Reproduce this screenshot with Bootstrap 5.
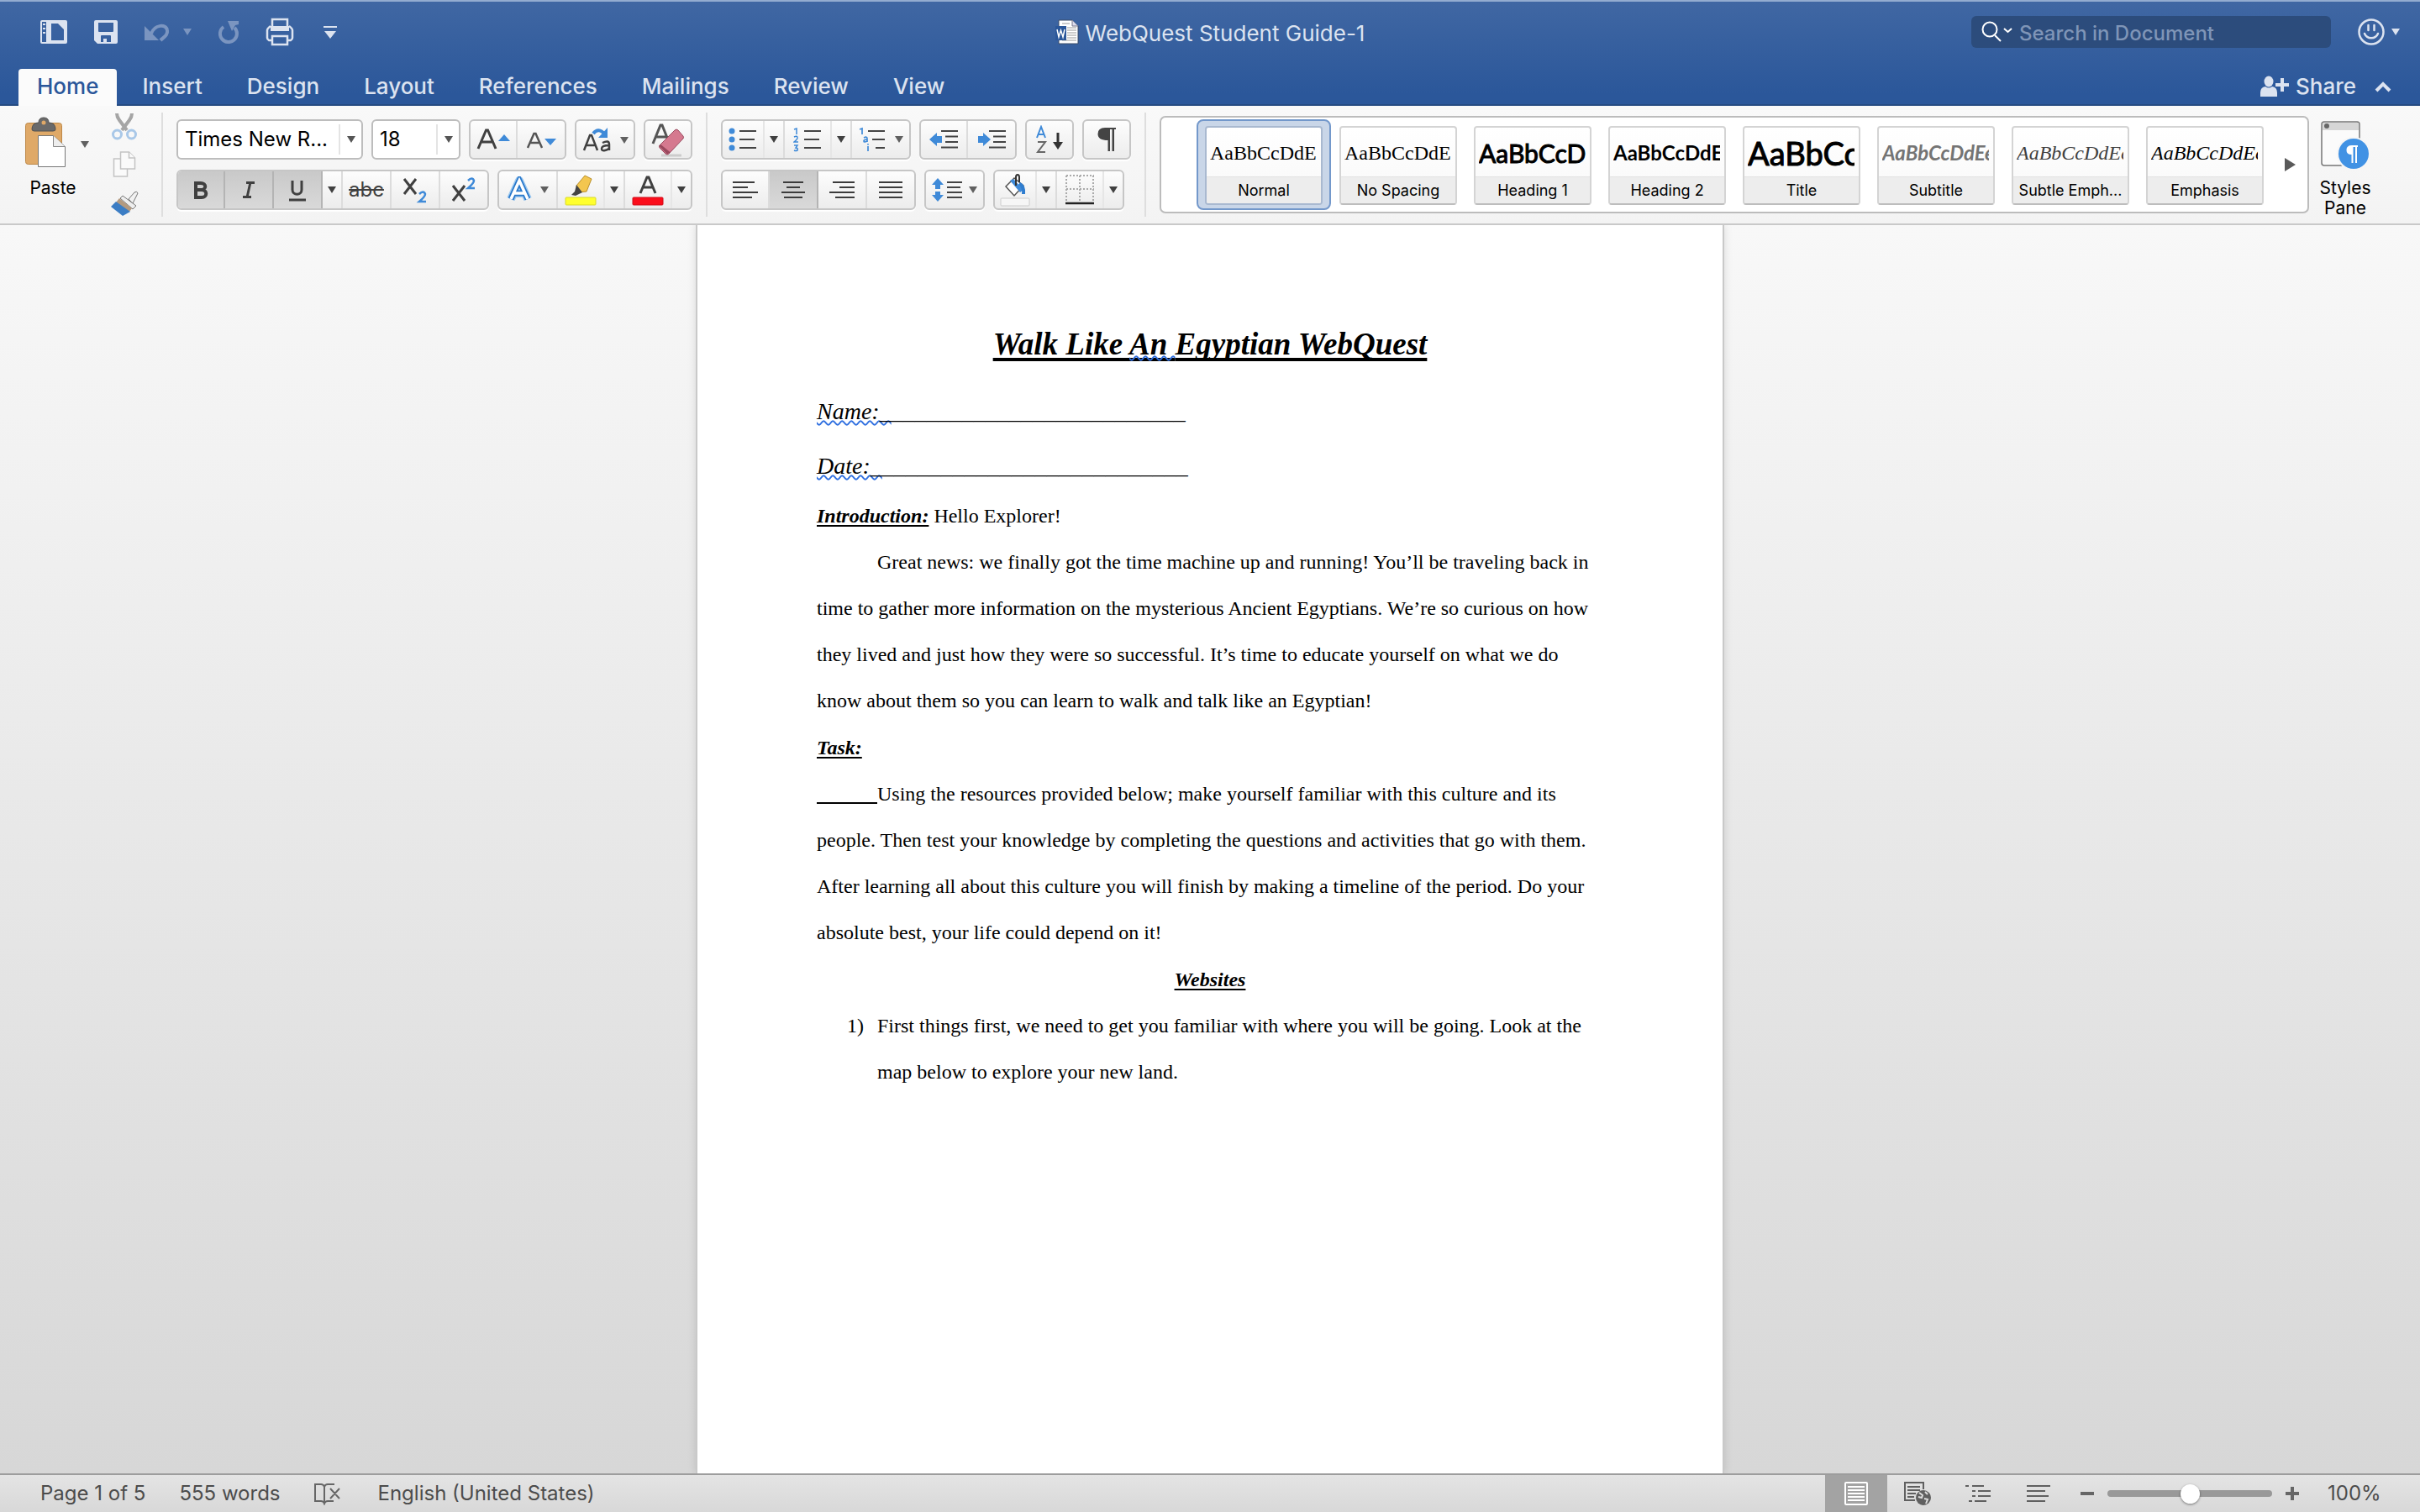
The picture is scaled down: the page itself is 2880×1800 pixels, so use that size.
<!DOCTYPE html>
<html lang="en">
<head>
<meta charset="utf-8">
<meta name="viewport" content="width=device-width, initial-scale=1">
<title>WebQuest Student Guide-1</title>
<link href="https://cdn.jsdelivr.net/npm/bootstrap@5.3.0/dist/css/bootstrap.min.css" rel="stylesheet">
<style>
  body { font-family: Inter, "Liberation Sans", sans-serif; font-size: 21px; line-height: 24px; color: #000; }
  button { font: inherit; color: inherit; }
  svg { display: block; flex: none; }
  .plain { background: none; border: 0; padding: 0; }

  /* title bar and tabs */
  .app-head { background: linear-gradient(#4067a3, #2b579a 90%); border-top: 2px solid #93acd0; border-bottom: 2px solid #264b82; color: #dce3f0; font-size: 26px; }
  .title-row { height: 72px; margin-bottom: 8px; }
  .title-left { padding-left: 48px; gap: 32px; }
  .title-right { padding-right: 24px; gap: 8px; }
  .doc-name { gap: 8px; }
  .doc-name span { padding-top: 3px; }
  .faded { color: #7b95c0; }
  .undo-pair { gap: 16px; }
  .search-box { width: 428px; height: 38px; margin-right: 24px; padding-left: 12px; gap: 5px; border-radius: 6px; background: #2c4c7c; }
  .search-box input { background: none; border: 0; outline: 0; padding: 2px 0 0; color: #fff; font-size: 24px; font-weight: 500; }
  .search-box input::placeholder { color: #7f95b7; opacity: 1; }
  .tab-row { height: 42px; font-weight: 500; }
  .tab-list { padding-left: 22px; gap: 7px; height: 44px; margin-bottom: -2px; }
  .tab-list .nav-link { color: #dce3f0; padding: 9px 23px 11px; border-radius: 4px 4px 0 0; }
  .tab-list .nav-link.active { background: #fbfbfb; color: #2b579a; padding: 9px 22px 11px; }
  .share-side { padding-right: 34px; gap: 22px; }

  /* ribbon */
  .ribbon { background: linear-gradient(#f9f9f9, #f3f3f3); border-bottom: 2px solid #c9c9c9; height: 142px; }
  .ribbon-sep { width: 2px; margin: 8px 16px; background: #dedede; }
  .paste-btn { width: 84px; margin: 12px 20px 0 24px; }
  .paste-btn span { padding-right: 6px; margin-top: 12px; }
  .mini-btn { display: block; width: 40px; height: 46px; }
  .rb-rows { padding-top: 16px; gap: 12px; }
  .rb-row { height: 48px; gap: 10px; }
  .rb-group { height: 48px; border: 2px solid #c6c6c6; border-radius: 6px; background: linear-gradient(#fdfdfd, #ececec); overflow: hidden; box-shadow: 0 2px 1px #fff; }
  .rb-group .btn { width: 58px; padding: 0; border: 0; border-radius: 0; border-right: 2px solid #dcdcdc; color: #404040; display: flex; align-items: center; justify-content: center; }
  .rb-group .btn:last-child { border-right: 0; width: 56px; }
  .rb-group .btn:first-child { width: 56px; }
  .rb-group .btn:only-child { width: 54px; }
  .rb-group .btn.w-wide { width: 70px; }
  .rb-group .btn.w-wide:last-child { width: 68px; }
  .rb-group .btn.w-split { width: 56px; border-right-color: #e6e6e6; }
  .rb-group .btn.w-split:first-child { width: 50px; }
  .rb-group .btn.w-drop { width: 24px; }
  .rb-group .btn.w-drop:last-child { width: 22px; }
  .rb-group .btn.pressed { background: linear-gradient(#c9c9c9, #d9d9d9); border-right-color: #b4b4b4; }
  .rb-group .btn.struck { font-size: 24px; text-decoration: line-through; text-decoration-thickness: 2px; }
  .combo { height: 48px; border: 2px solid #bdbdbd; border-radius: 6px; background: #fff; position: relative; }
  .combo select { appearance: none; border: 0; background: none; outline: 0; width: 100%; height: 44px; padding: 0 0 0 8px; font-size: 24px; color: #000; }
  .combo .combo-mark { position: absolute; right: 0; top: 4px; bottom: 4px; width: 27px; border-left: 2px solid #e4e4e4; color: #555; pointer-events: none; }
  .combo-font { width: 222px; }
  .combo-size { width: 106px; }

  .gallery { margin-top: 12px; height: 116px; border: 2px solid #bcbcbc; border-radius: 7px; background: #fff; padding-left: 42px; }
  .style-item { width: 160px; height: 108px; border: 2px solid transparent; border-radius: 8px; padding: 6px 8px 8px; }
  .style-item.chosen { background: #c9d6e8; border-color: #7398cb; }
  .style-tile { width: 140px; height: 94px; border: 2px solid #d4d4d4; border-bottom-color: #bdbdbd; border-radius: 4px; background: linear-gradient(#fff, #f8f8f8); display: flex; flex-direction: column; overflow: hidden; }
  .style-item.chosen .style-tile { border-color: #a9b9d0; }
  .style-demo { height: 60px; line-height: 60px; margin: 0 5px 0 4px; overflow: hidden; white-space: nowrap; text-align: left; font-family: "Liberation Serif", serif; font-size: 24px; }
  .style-name { flex: 1; border-top: 1px solid #e2e2e2; background: #ededed; font-size: 18px; line-height: 31px; text-align: center; }
  .demo-sans { font-family: Lato, "Open Sans", sans-serif; }
  .demo-h1 { font-size: 30px; -webkit-text-stroke: 1px #000; }
  .demo-h2 { font-size: 24px; font-weight: 700; }
  .demo-title { font-size: 38px; -webkit-text-stroke: 1px #000; }
  .demo-sub { font-size: 24px; font-style: italic; font-weight: 700; color: #747474; }
  .demo-subtle { font-style: italic; color: #404040; }
  .gallery-next { margin-left: auto; width: 40px; }
  .pane-btn { width: 86px; margin: 18px 46px 0 0; }
  .pane-btn span { margin-top: 10px; }

  /* document */
  .desk { background: linear-gradient(#f8f8f8, #d7d7d7); min-height: 0; }
  .sheet { width: 1224px; padding: 101px 142px 0; background: #fff; border: 2px solid #c9c9c9; border-width: 0 2px; box-shadow: 0 0 10px rgba(0,0,0,.12); font-family: "Liberation Serif", serif; font-size: 24px; line-height: 55px; }
  .sheet p, .sheet h1, .sheet h2, .sheet ol { margin: 0; font-size: inherit; line-height: inherit; }
  .sheet u { text-underline-offset: 3px; text-decoration-thickness: 2px; text-decoration-skip-ink: none; }
  .sheet h1 { font-size: 37px; line-height: 82px; font-weight: 700; font-style: italic; text-align: center; }
  .sheet h1 u { text-decoration-thickness: 4px; text-underline-offset: 4px; }
  .sheet h2 { line-height: 56px; font-weight: 700; font-style: italic; }
  .sheet .blank-name { font-size: 28px; line-height: 78px; font-style: italic; }
  .sheet .blank-date { font-size: 28px; line-height: 52px; font-style: italic; margin-bottom: 6px; }
  .proof { text-decoration: underline wavy #2f6fe0 2px; text-decoration-skip-ink: none; text-underline-offset: 1px; }
  .sheet .indent { text-indent: 72px; }
  .tab-line { display: inline-block; width: 72px; height: 20px; border-bottom: 2px solid #000; vertical-align: -4px; }
  .sheet ol { list-style: none; padding: 0 0 0 72px; }
  .item-no { display: inline-block; width: 36px; margin-left: -36px; }

  /* status bar */
  .status { height: 46px; background: linear-gradient(#e4e4e4, #d8d8d8); border-top: 2px solid #9d9d9d; color: #4c4c4c; font-size: 24px; }
  .status-left { padding-left: 48px; gap: 40px; }
  .view-btn { width: 72px; height: 44px; display: flex; align-items: center; justify-content: center; color: #606060; }
  .view-btn.on { background: #a3a3a3; color: #fff; width: 74px; }
  .zoom-side { padding-left: 14px; gap: 16px; }
  .zoom-side input { appearance: none; width: 196px; height: 8px; border-radius: 4px; background: #999; margin: 0; }
  .zoom-side input::-webkit-slider-thumb { appearance: none; width: 23px; height: 23px; border-radius: 50%; background: #fff; box-shadow: 0 1px 3px rgba(0,0,0,.45); }
  .zoom-val { width: 110px; margin-left: 18px; }
</style>
</head>
<body class="vh-100 d-flex flex-column overflow-hidden">

<svg width="0" height="0" class="position-absolute" aria-hidden="true">
  <symbol id="caret" viewBox="0 0 10 8"><path d="M0 0h10L5 8z" fill="currentColor"/></symbol>
</svg>

<header class="app-head">
  <div class="title-row d-flex align-items-center">
    <div class="title-left d-flex align-items-center flex-fill w-25">
      <button class="plain" aria-label="Sidebar"><svg width="32" height="30" viewBox="0 0 32 30"><path fill="#dce3f0" fill-rule="evenodd" d="M2 1h28q2 0 2 2v24q0 2-2 2H2q-2 0-2-2V3q0-2 2-2zm0 2v24h5V3zm11 2v20h15V12l-7-7z"/><path d="M3 6h3M3 11h3M3 16h3" stroke="#dce3f0" stroke-width="2"/><path d="M20 5v8h8" fill="none" stroke="#3a619f" stroke-width="2"/><path d="M21 4h8v8z" fill="#dce3f0"/></svg></button>
      <button class="plain" aria-label="Save"><svg width="28" height="30" viewBox="0 0 28 30"><path fill="#dce3f0" fill-rule="evenodd" d="M2 1h24q2 0 2 2v24q0 2-2 2H4l-4-4V3q0-2 2-2zm3 3v10q0 1 1 1h16q1 0 1-1V4zm3 16v7h3v-4h4v4h5v-7q0-1-1-1H9q-1 0-1 1z"/></svg></button>
      <div class="undo-pair d-flex align-items-center faded">
        <button class="plain" aria-label="Undo"><svg width="30" height="24" viewBox="0 0 30 24"><path d="M0 5v17h17z" fill="currentColor"/><path d="M8 14C12 3 26 2 27 10c1 6-4 8-8 12" fill="none" stroke="currentColor" stroke-width="4"/></svg></button>
        <button class="plain" aria-label="Undo history"><svg width="10" height="8"><use href="#caret"/></svg></button>
      </div>
      <button class="plain faded" aria-label="Redo"><svg width="24" height="28" viewBox="0 0 24 28"><path d="M11 1h13v4l-4 1-4 7z" fill="currentColor"/><path d="M6 8a10 10 0 1 0 13 1" fill="none" stroke="currentColor" stroke-width="4"/></svg></button>
      <button class="plain" aria-label="Print"><svg width="34" height="34" viewBox="0 0 34 34" fill="none" stroke="#dce3f0" stroke-width="2.500"><path d="M8 14V2h18v12"/><path d="M8 27H4q-2-1-2-3v-9q0-2 4-5M26 27h4q2-1 2-3v-9q0-2-4-5"/><rect x="6" y="10" width="22" height="6" fill="#dce3f0" stroke="none"/><rect x="8" y="22" width="18" height="10"/></svg></button>
      <button class="plain" aria-label="Customize toolbar"><svg width="20" height="16" viewBox="0 0 20 16" fill="#dce3f0"><path d="M3 1h16v2H3zM4 7h14l-7 9z"/></svg></button>
    </div>
    <div class="doc-name d-flex align-items-center">
      <svg width="28" height="30" viewBox="0 0 28 30"><path d="M4 1h16l7 7v21H4z" fill="#fff" stroke="#3b4a66"/><path d="M20 1v7h7" fill="#dde" stroke="#778"/><path d="M8 5h9M14 10h11M14 13h11M14 16h11M14 19h11M14 22h11M8 25h17" stroke="#999" stroke-width="1"/><rect y="8" width="13" height="17" fill="#2b579a"/><path d="M2 12l2 9 2.500-8L9 21l2-9" fill="none" stroke="#fff" stroke-width="1.500"/></svg>
      <span>WebQuest Student Guide-1</span>
    </div>
    <div class="title-right d-flex align-items-center justify-content-end flex-fill w-25">
      <label class="search-box d-flex align-items-center">
        <svg width="40" height="26" viewBox="0 0 40 26" fill="none" stroke="#fff" stroke-width="2"><circle cx="10" cy="10" r="8.500"/><path d="M16 17l7 7M27 9l4.500 4L36 9"/></svg>
        <input class="flex-fill" type="text" placeholder="Search in Document" aria-label="Search in Document">
      </label>
      <button class="plain" aria-label="Feedback"><svg width="32" height="32" viewBox="0 0 32 32" fill="none" stroke="#dce3f0" stroke-width="2.500"><circle cx="16" cy="16" r="14.500"/><path d="M12.500 8v6M19.500 8v6M8 18c3 7 13 7 16 0" stroke-width="2.500" stroke-linecap="round"/></svg></button>
      <button class="plain" aria-label="Feedback menu"><svg width="10" height="8"><use href="#caret"/></svg></button>
    </div>
  </div>
  <div class="tab-row d-flex justify-content-between">
    <nav class="nav tab-list">
      <a class="nav-link active" href="#">Home</a>
      <a class="nav-link" href="#">Insert</a>
      <a class="nav-link" href="#">Design</a>
      <a class="nav-link" href="#">Layout</a>
      <a class="nav-link" href="#">References</a>
      <a class="nav-link" href="#">Mailings</a>
      <a class="nav-link" href="#">Review</a>
      <a class="nav-link" href="#">View</a>
    </nav>
    <div class="share-side d-flex align-items-center">
      <button class="plain d-flex align-items-center gap-2"><svg width="34" height="26" viewBox="0 0 34 26" fill="#dce3f0"><ellipse cx="10" cy="7" rx="5.500" ry="6.500"/><path d="M0 25v-5q0-6 6-7 4 3 8 0 6 1 6 7v5zM24 3h4v6h6v4h-6v6h-4v-6h-6V9h6z"/></svg>Share</button>
      <button class="plain" aria-label="Collapse ribbon"><svg width="20" height="14" viewBox="0 0 20 14" fill="none" stroke="#dce3f0" stroke-width="4"><path d="M2 12l8-8 8 8"/></svg></button>
    </div>
  </div>
</header>

<section class="ribbon d-flex" aria-label="Home ribbon">
  <button class="plain paste-btn d-flex flex-column align-items-center align-self-start">
    <svg width="84" height="62" viewBox="0 0 84 62"><rect x="6.500" y="8.500" width="43" height="49" rx="3" fill="#dfa968" stroke="#bd8848"/><path d="M14 16q0-8 8-8 0-6 6-6t6 6q8 0 8 8 0 2-3 2H17q-3 0-3-2z" fill="#6a6a6a" stroke="#505050"/><circle cx="28" cy="8" r="2.500" fill="#dfa968"/><path d="M21.500 23.500h18l14 13v24h-32z" fill="#fff" stroke="#777"/><path d="M39.500 23.500v13h14" fill="#eee" stroke="#888"/><path d="M72 30h10l-5 8z" fill="#606060"/></svg>
    <span>Paste</span>
  </button>
  <div>
    <button class="plain mini-btn" aria-label="Cut"><svg width="40" height="46" viewBox="0 0 40 46" fill="none"><path d="M11 9q0 4 3 8l9 12M29 9q0 4-3 8l-9 12" stroke="#a5a5a5" stroke-width="4"/><circle cx="11.500" cy="34" r="5" stroke="#a9c8e8" stroke-width="3"/><circle cx="28.500" cy="34" r="5" stroke="#a9c8e8" stroke-width="3"/></svg></button>
    <button class="plain mini-btn" aria-label="Copy"><svg width="40" height="46" viewBox="0 0 40 46" fill="#fafafa" stroke="#c3c3c3" stroke-width="1.500"><path d="M7.500 17h10l6 6v15h-16z"/><path d="M15.500 9h10l7 7v13h-17z"/><path d="M25.500 9v7h7"/></svg></button>
    <button class="plain mini-btn" aria-label="Format painter"><svg width="40" height="46" viewBox="0 0 40 46"><path d="M25 19l7-8q3-2 4 1l-6 12z" fill="#f1f1f1" stroke="#777"/><path d="M18 15l16 12-4 4-15-13z" fill="#eee" stroke="#777"/><path d="M14 18l15 12-3 4-16-11z" fill="#b39a80"/><path d="M10 22l17 12-9 5L4 28z" fill="#3b7dc4"/></svg></button>
  </div>
  <div class="ribbon-sep ms-4"></div>

  <div class="rb-rows d-flex flex-column">
    <div class="rb-row d-flex">
      <div class="combo combo-font"><select aria-label="Font"><option>Times New R...</option></select><span class="combo-mark d-flex align-items-center justify-content-center"><svg width="10" height="8"><use href="#caret"/></svg></span></div>
      <div class="combo combo-size"><select aria-label="Font size"><option>18</option></select><span class="combo-mark d-flex align-items-center justify-content-center"><svg width="10" height="8"><use href="#caret"/></svg></span></div>
      <div class="rb-group d-flex">
        <button class="btn" aria-label="Grow font"><svg width="42" height="30" viewBox="0 0 42 30"><path d="M3 26L12.500 4h2L24 26M7 18h13" fill="none" stroke="#404040" stroke-width="3"/><path d="M27 17h14l-7-8z" fill="#3f8ad8"/></svg></button>
        <button class="btn" aria-label="Shrink font"><svg width="42" height="30" viewBox="0 0 42 30"><path d="M5 25L12.500 8h2L22 25M8 19h11" fill="none" stroke="#555" stroke-width="2.500"/><path d="M25 14h14l-7 8z" fill="#3f8ad8"/></svg></button>
      </div>
      <div class="rb-group d-flex">
        <button class="btn w-wide" aria-label="Change case"><svg width="60" height="36" viewBox="0 0 60 36"><path d="M5 31l7-18h2l7 18M8 25h10" fill="none" stroke="#404040" stroke-width="2.500"/><path d="M27 22q8-4 8 2v7M35 25q-9 0-9 4 0 3 4 2 5-1 5-4" fill="none" stroke="#404040" stroke-width="2.500"/><path d="M16 11q6-8 14 1" fill="none" stroke="#3f8ad8" stroke-width="4"/><path d="M33 4v12H22z" fill="#3f8ad8"/><path d="M48 15h10l-5 8z" fill="#606060"/></svg></button>
      </div>
      <div class="rb-group d-flex">
        <button class="btn" aria-label="Clear formatting"><svg width="44" height="42" viewBox="0 0 44 42"><path d="M4 26l9-22h2l8 20M8 18h12" fill="none" stroke="#555" stroke-width="3"/><path d="M14 40h24" stroke="#ccc" stroke-width="3"/><path d="M12 28L30 10q2-2 4 0l6 7q1 2 0 3L23 38q-2 2-4 0l-7-7q-1-2 0-3z" fill="#d5798f" stroke="#99495e"/><path d="M12 28l10 10M13 28l11 9" stroke="#99495e" stroke-width="2"/></svg></button>
      </div>
    </div>
    <div class="rb-row d-flex">
      <div class="rb-group d-flex">
        <button class="btn pressed" aria-label="Bold" aria-pressed="true"><svg width="20" height="24" viewBox="0 0 20 24" fill="none" stroke="#404040" stroke-width="4"><path d="M4 4h6c7 0 7 8 0 8H4zM4 12h7c7 0 7 9 0 9H4z"/></svg></button>
        <button class="btn pressed" aria-label="Italic" aria-pressed="true"><svg width="20" height="24" viewBox="0 0 20 24" fill="none" stroke="#404040" stroke-width="3"><path d="M7 3.500h10M12 3L8 21M3 20.500h10"/></svg></button>
        <button class="btn pressed" aria-label="Underline" aria-pressed="true"><svg width="22" height="28" viewBox="0 0 22 28" fill="none" stroke="#404040" stroke-width="3"><path d="M5 3v11c0 7 11 7 11 0V3M1 26h20"/></svg></button>
        <button class="btn w-drop" aria-label="Underline style"><svg width="10" height="8"><use href="#caret"/></svg></button>
        <button class="btn struck" aria-label="Strikethrough">abc</button>
        <button class="btn" aria-label="Subscript"><svg width="30" height="32" viewBox="0 0 30 32" fill="none"><path d="M2 3l14 18M16 3L2 21" stroke="#404040" stroke-width="3"/><path d="M20 21q5-5 7 0 0 3-7 9h8" stroke="#3f8ad8" stroke-width="2.500"/></svg></button>
        <button class="btn" aria-label="Superscript"><svg width="30" height="32" viewBox="0 0 30 32" fill="none"><path d="M2 11l14 18M16 11L2 29" stroke="#404040" stroke-width="3"/><path d="M20 5q5-5 7 0 0 3-7 9h8" stroke="#3f8ad8" stroke-width="2.500"/></svg></button>
      </div>
      <div class="rb-group d-flex">
        <button class="btn w-wide" aria-label="Text effects"><svg width="56" height="32" viewBox="0 0 56 32" fill="none"><path d="M8 27L18 5l10 22M12 20h12" stroke="#9cc8ef" stroke-width="10" stroke-linejoin="round"/><path d="M8 27L18 5l10 22M12 20h12" stroke="#2878cb" stroke-width="7"/><path d="M8 27L18 5l10 22M12 20h12" stroke="#fff" stroke-width="3.500"/><path d="M43 12h10l-5 8z" fill="#606060"/></svg></button>
        <button class="btn w-split" aria-label="Highlight"><svg width="38" height="38" viewBox="0 0 38 38"><path d="M14 14L24 2l8 4-6 15-9 1z" fill="#f3c64f" stroke="#b98f2a"/><path d="M14 13l-2 8-4 4 5 1 8-4z" fill="#444"/><rect x="1" y="28" width="36" height="9" rx="1" fill="#ffff2e" stroke="#d9d92a"/></svg></button>
        <button class="btn w-drop" aria-label="Highlight colors"><svg width="10" height="8"><use href="#caret"/></svg></button>
        <button class="btn w-split" aria-label="Font color"><svg width="38" height="38" viewBox="0 0 38 38"><path d="M10 23l8-19h2l8 19M13 16h12" fill="none" stroke="#404040" stroke-width="3"/><rect x="1" y="28" width="36" height="9" rx="1" fill="#fb0d1b" stroke="#d00c18"/></svg></button>
        <button class="btn w-drop" aria-label="Font colors"><svg width="10" height="8"><use href="#caret"/></svg></button>
      </div>
    </div>
  </div>
  <div class="ribbon-sep"></div>

  <div class="rb-rows d-flex flex-column">
    <div class="rb-row d-flex">
      <div class="rb-group d-flex">
        <button class="btn w-split" aria-label="Bullets"><svg width="34" height="28" viewBox="0 0 34 28"><g fill="#3f8ad8"><circle cx="4" cy="4" r="3.500"/><circle cx="4" cy="14" r="3.500"/><circle cx="4" cy="24" r="3.500"/></g><path d="M13 4h20M13 14h18M13 24h20" stroke="#444" stroke-width="2"/></svg></button>
        <button class="btn w-drop" aria-label="Bullet library"><svg width="10" height="8"><use href="#caret"/></svg></button>
        <button class="btn w-split" aria-label="Numbering"><svg width="34" height="30" viewBox="0 0 34 30" fill="none"><path d="M1 3l3-1v7M1 12q4-2 4 1 0 2-4 5h5M1 22h4l-2 3q3 0 2 3-2 1-4 0" stroke="#3f8ad8" stroke-width="1.500"/><path d="M13 5h20M13 15h18M13 25h20" stroke="#444" stroke-width="2"/></svg></button>
        <button class="btn w-drop" aria-label="Number library"><svg width="10" height="8"><use href="#caret"/></svg></button>
        <button class="btn w-wide" aria-label="Multilevel list"><svg width="56" height="30" viewBox="0 0 56 30" fill="none"><path d="M3 3l3-1v7M8 13q4-2 4 1v4M12 15q-4 0-4 2t4 0M13 23v6M13 20v1.500" stroke="#3f8ad8" stroke-width="1.700"/><path d="M13 5h20M18 15h15M22 25h11" stroke="#444" stroke-width="2"/><path d="M45 11h10l-5 8z" fill="#606060"/></svg></button>
      </div>
      <div class="rb-group d-flex">
        <button class="btn" aria-label="Decrease indent"><svg width="36" height="24" viewBox="0 0 36 24"><path d="M1 12l9-8v4h6v8h-6v4z" fill="#3f8ad8"/><path d="M15 2h20M20 8.500h15M20 15h15M15 21.500h20" stroke="#444" stroke-width="2"/></svg></button>
        <button class="btn" aria-label="Increase indent"><svg width="36" height="24" viewBox="0 0 36 24"><path d="M17 12L8 4v4H2v8h6v4z" fill="#3f8ad8"/><path d="M15 2h20M20 8.500h15M20 15h15M15 21.500h20" stroke="#444" stroke-width="2"/></svg></button>
      </div>
      <div class="rb-group d-flex">
        <button class="btn" aria-label="Sort"><svg width="34" height="34" viewBox="0 0 34 34" fill="none"><path d="M2 15L7 2l5 13M3.500 11h7" stroke="#3f8ad8" stroke-width="2"/><path d="M3 20h9L3 32h9" stroke="#666" stroke-width="2"/><path d="M27 9v12" stroke="#333" stroke-width="3"/><path d="M21 20h12l-6 9z" fill="#333"/></svg></button>
      </div>
      <div class="rb-group d-flex">
        <button class="btn" aria-label="Show formatting marks"><svg width="24" height="30" viewBox="0 0 24 30"><path d="M10 1h13v2h-2v26h-2.500V3H16v26h-2.500V16q-12 0-12-7.500T10 1z" fill="#444"/></svg></button>
      </div>
    </div>
    <div class="rb-row d-flex">
      <div class="rb-group d-flex">
        <button class="btn" aria-label="Align left"><svg width="30" height="22" viewBox="0 0 30 22" stroke="#3c3c3c" stroke-width="2"><path d="M0 2h26M0 8h18M0 14h30M0 20h23"/></svg></button>
        <button class="btn pressed" aria-label="Align center" aria-pressed="true"><svg width="30" height="22" viewBox="0 0 30 22" stroke="#3c3c3c" stroke-width="2"><path d="M3 2h24M7 8h16M1 14h28M4 20h22"/></svg></button>
        <button class="btn" aria-label="Align right"><svg width="30" height="22" viewBox="0 0 30 22" stroke="#3c3c3c" stroke-width="2"><path d="M4 2h26M12 8h18M0 14h30M7 20h23"/></svg></button>
        <button class="btn" aria-label="Justify"><svg width="30" height="22" viewBox="0 0 30 22" stroke="#3c3c3c" stroke-width="2"><path d="M1 2h28M1 8h28M1 14h28M1 20h28"/></svg></button>
      </div>
      <div class="rb-group d-flex">
        <button class="btn w-wide" aria-label="Line spacing"><svg width="56" height="30" viewBox="0 0 56 30"><path d="M8 1l7 8h-4v5H5V9H1zM8 29l7-8h-4v-4H5v4H1z" fill="#3f8ad8"/><path d="M19 6h18M19 12h16M19 18h18M19 24h18" stroke="#444" stroke-width="2"/><path d="M45 11h10l-5 8z" fill="#606060"/></svg></button>
      </div>
      <div class="rb-group d-flex">
        <button class="btn w-split" aria-label="Shading"><svg width="36" height="40" viewBox="0 0 36 40"><path d="M7 16L17 6l11 9-11 12z" fill="#fff" stroke="#555" stroke-width="1.500"/><path d="M12 9l4-2 12 13-4 3z" fill="#3f8ad8"/><path d="M24 11q7 3 6 14h-4q1-7-4-11z" fill="#2f7dcf"/><path d="M19 15V5q0-3 2-3t2 3v6" fill="none" stroke="#333" stroke-width="2"/><rect x="1" y="30" width="34" height="9" rx="1" fill="#f6f6f6" stroke="#ccc"/></svg></button>
        <button class="btn w-drop" aria-label="Shading colors"><svg width="10" height="8"><use href="#caret"/></svg></button>
        <button class="btn w-split" aria-label="Borders"><svg width="34" height="36" viewBox="0 0 34 36"><path d="M1 1h33M1 17h33M1 1v30M17 1v30M33 1v30" stroke="#aaa" stroke-width="2" stroke-dasharray="2 2"/><path d="M0 34h34" stroke="#222" stroke-width="2.500"/></svg></button>
        <button class="btn w-drop" aria-label="Border styles"><svg width="10" height="8"><use href="#caret"/></svg></button>
      </div>
    </div>
  </div>
  <div class="ribbon-sep"></div>

  <div class="gallery d-flex align-items-center flex-fill">
    <button class="plain style-item chosen"><span class="style-tile"><span class="style-demo">AaBbCcDdEe</span><span class="style-name">Normal</span></span></button>
    <button class="plain style-item"><span class="style-tile"><span class="style-demo">AaBbCcDdEe</span><span class="style-name">No Spacing</span></span></button>
    <button class="plain style-item"><span class="style-tile"><span class="style-demo demo-sans demo-h1">AaBbCcDd</span><span class="style-name">Heading 1</span></span></button>
    <button class="plain style-item"><span class="style-tile"><span class="style-demo demo-sans demo-h2">AaBbCcDdEe</span><span class="style-name">Heading 2</span></span></button>
    <button class="plain style-item"><span class="style-tile"><span class="style-demo demo-sans demo-title">AaBbCc</span><span class="style-name">Title</span></span></button>
    <button class="plain style-item"><span class="style-tile"><span class="style-demo demo-sans demo-sub">AaBbCcDdEe</span><span class="style-name">Subtitle</span></span></button>
    <button class="plain style-item"><span class="style-tile"><span class="style-demo demo-subtle">AaBbCcDdEe</span><span class="style-name">Subtle Emph...</span></span></button>
    <button class="plain style-item"><span class="style-tile"><span class="style-demo fst-italic">AaBbCcDdEe</span><span class="style-name">Emphasis</span></span></button>
    <button class="plain gallery-next d-flex justify-content-center" aria-label="More styles"><svg width="14" height="18" viewBox="0 0 14 18"><path d="M0 1l13 8-13 8z" fill="#5a5a5a"/></svg></button>
  </div>
  <button class="plain pane-btn d-flex flex-column align-items-center align-self-start">
    <svg width="58" height="58" viewBox="0 0 58 58"><rect x="1" y="1" width="45" height="52" rx="3" fill="#fbfbfb" stroke="#777" stroke-width="1.500"/><path d="M2 2h43v9H2z" fill="#d6d6d6"/><circle cx="7" cy="6" r="3" fill="#666"/><circle cx="39" cy="39" r="20" fill="#f6f6f6"/><circle cx="39" cy="39" r="18" fill="#4192e4"/><path d="M37 29h7v2h-1v19h-2V31h-2.500v19h-2V40q-6 0-6-5.500t6.500-5.500z" fill="#fff"/></svg>
    <span>Styles<br>Pane</span>
  </button>
</section>

<main class="desk flex-fill d-flex justify-content-center overflow-hidden">
  <article class="sheet">
    <h1><u>Walk Like <span class="proof">An </span>Egyptian WebQuest</u></h1>
    <p class="blank-name"><span class="proof">Name:_</span>_________________________</p>
    <p class="blank-date"><span class="proof">Date:_</span>__________________________</p>
    <p><u class="fw-bold fst-italic">Introduction:</u> Hello Explorer!</p>
    <p class="indent">Great news: we finally got the time machine up and running! You’ll be traveling back in time to gather more information on the mysterious Ancient Egyptians. We’re so curious on how they lived and just how they were so successful. It’s time to educate yourself on what we do know about them so you can learn to walk and talk like an Egyptian!</p>
    <h2><u>Task:</u></h2>
    <p><span class="tab-line"></span>Using the resources provided below; make yourself familiar with this culture and its people. Then test your knowledge by completing the questions and activities that go with them. After learning all about this culture you will finish by making a timeline of the period. Do your absolute best, your life could depend on it!</p>
    <h2 class="text-center"><u>Websites</u></h2>
    <ol><li><span class="item-no">1)</span>First things first, we need to get you familiar with where you will be going. Look at the map below to explore your new land.</li></ol>
  </article>
</main>

<footer class="status d-flex justify-content-between align-items-center">
  <div class="status-left d-flex align-items-center">
    <span>Page 1 of 5</span>
    <span>555 words</span>
    <button class="plain" aria-label="Proofing"><svg width="36" height="28" viewBox="0 0 36 28" fill="none" stroke="#666" stroke-width="2"><path d="M24 3h-8q-3 0-4 3-1-3-4-3H1v20h7q3 0 4 3 1-3 4-3h7M12 6v19M19 8l11 12M30 8L19 20"/></svg></button>
    <span>English (United States)</span>
  </div>
  <div class="d-flex align-items-center">
    <button class="plain view-btn on" aria-label="Print layout"><svg width="28" height="28" viewBox="0 0 28 28" fill="none" stroke="currentColor" stroke-width="2"><rect x="1" y="1" width="26" height="26" rx="1"/><path d="M4 6h20M4 10h20M4 14h20M4 18h20M4 22h20"/></svg></button>
    <button class="plain view-btn" aria-label="Web layout"><svg width="34" height="30" viewBox="0 0 34 30" fill="none" stroke="currentColor" stroke-width="2"><path d="M14 23H2V2h22v8M5 7h15M5 11h15M5 15h10M5 19h8"/><circle cx="24" cy="20" r="9" fill="currentColor" stroke="none"/><path d="M19 14l4 3-1 3-4-1M25 21l4 1-2 5M26 13l3 3" stroke="#ddd"/></svg></button>
    <button class="plain view-btn" aria-label="Outline"><svg width="30" height="22" viewBox="0 0 30 22" fill="none" stroke="currentColor" stroke-width="2"><path d="M0 2h4M8 2h14M8 8h4M15 8h15M8 14h4M15 14h15M4 20h4M11 20h14"/></svg></button>
    <button class="plain view-btn" aria-label="Draft"><svg width="28" height="22" viewBox="0 0 28 22" stroke="currentColor" stroke-width="2"><path d="M0 2h28M0 8h22M0 14h26M0 20h22"/></svg></button>
    <div class="zoom-side d-flex align-items-center">
      <button class="plain" aria-label="Zoom out"><svg width="16" height="16" viewBox="0 0 16 16"><path d="M0 8h16" stroke="#666" stroke-width="4"/></svg></button>
      <input type="range" min="0" max="200" value="100" aria-label="Zoom">
      <button class="plain" aria-label="Zoom in"><svg width="16" height="16" viewBox="0 0 16 16"><path d="M0 8h16M8 0v16" stroke="#666" stroke-width="4"/></svg></button>
      <span class="zoom-val">100%</span>
    </div>
  </div>
</footer>

<script src="https://cdn.jsdelivr.net/npm/bootstrap@5.3.0/dist/js/bootstrap.bundle.min.js"></script>
</body>
</html>
